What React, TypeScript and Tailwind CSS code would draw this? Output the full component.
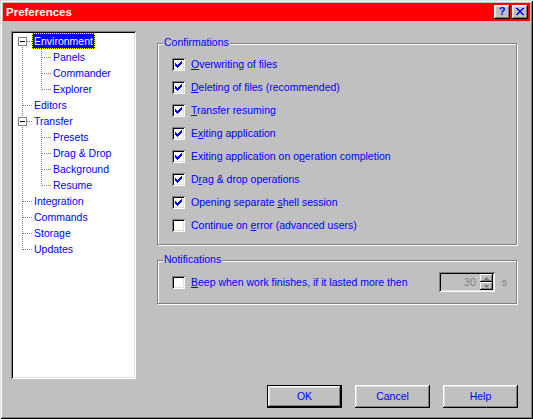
import React from 'react';

const raised =
  'shadow-[inset_-1px_-1px_#000,inset_1px_1px_#fff,inset_-2px_-2px_#808080,inset_2px_2px_#dfdfdf]';
const sunken =
  'shadow-[inset_1px_1px_#808080,inset_-1px_-1px_#fff,inset_2px_2px_#000,inset_-2px_-2px_#dfdfdf]';

const CHECK: [number, number, number][] = [
  [0, 6, 1],
  [1, 5, 2],
  [2, 0, 1],
  [2, 4, 3],
  [3, 0, 2],
  [3, 3, 3],
  [4, 0, 5],
  [5, 1, 3],
  [6, 2, 1],
];

const CLOSE: [number, number, number][] = [
  [0, 0, 2],
  [0, 6, 2],
  [1, 1, 2],
  [1, 5, 2],
  [2, 2, 4],
  [3, 3, 2],
  [4, 2, 4],
  [5, 1, 2],
  [5, 5, 2],
  [6, 0, 2],
  [6, 6, 2],
];

function CheckBox({ checked }: { checked: boolean }) {
  return (
    <div className={`w-[13px] h-[13px] shrink-0 bg-white flex items-center justify-center ${sunken}`}>
      {checked && (
        <svg width="7" height="7" viewBox="0 0 7 7" shapeRendering="crispEdges" fill="#0000ff">
          {CHECK.map(([y, x, w], i) => (
            <rect key={i} x={x} y={y} width={w} height={1} />
          ))}
        </svg>
      )}
    </div>
  );
}

function CheckRow({ checked, children }: { checked: boolean; children: React.ReactNode }) {
  return (
    <div className="flex items-center h-[13px] gap-[6px]">
      <CheckBox checked={checked} />
      <span className="leading-[13px] whitespace-nowrap text-[#0000ff]">{children}</span>
    </div>
  );
}

type TreeRow = {
  label: string;
  level: 0 | 1;
  pos: 'first' | 'mid' | 'last';
  box?: boolean;
  selected?: boolean;
};

const TREE: TreeRow[] = [
  { label: 'Environment', level: 0, pos: 'first', box: true, selected: true },
  { label: 'Panels', level: 1, pos: 'mid' },
  { label: 'Commander', level: 1, pos: 'mid' },
  { label: 'Explorer', level: 1, pos: 'last' },
  { label: 'Editors', level: 0, pos: 'mid' },
  { label: 'Transfer', level: 0, pos: 'mid', box: true },
  { label: 'Presets', level: 1, pos: 'mid' },
  { label: 'Drag & Drop', level: 1, pos: 'mid' },
  { label: 'Background', level: 1, pos: 'mid' },
  { label: 'Resume', level: 1, pos: 'last' },
  { label: 'Integration', level: 0, pos: 'mid' },
  { label: 'Commands', level: 0, pos: 'mid' },
  { label: 'Storage', level: 0, pos: 'mid' },
  { label: 'Updates', level: 0, pos: 'last' },
];

function Connector({ row }: { row: TreeRow }) {
  const dot = { stroke: '#808080', strokeWidth: 1, strokeDasharray: '1 1' };
  if (row.level === 0) {
    const y1 = row.pos === 'first' ? 8 : 0;
    const y2 = row.pos === 'last' ? 9 : 16;
    return (
      <svg width="19" height="16" viewBox="0 0 19 16" shapeRendering="crispEdges" className="shrink-0">
        <line x1="9.5" y1={y1} x2="9.5" y2={y2} {...dot} />
        <line x1="10" y1="8.5" x2="19" y2="8.5" {...dot} />
        {row.box && (
          <>
            <rect x="5.5" y="4.5" width="8" height="8" fill="#fff" stroke="#808080" />
            <line x1="7" y1="8.5" x2="12" y2="8.5" stroke="#000" />
          </>
        )}
      </svg>
    );
  }
  const y2 = row.pos === 'last' ? 9 : 16;
  return (
    <svg width="38" height="16" viewBox="0 0 38 16" shapeRendering="crispEdges" className="shrink-0">
      <line x1="9.5" y1="0" x2="9.5" y2="16" {...dot} />
      <line x1="28.5" y1="0" x2="28.5" y2={y2} {...dot} />
      <line x1="29" y1="8.5" x2="38" y2="8.5" {...dot} />
    </svg>
  );
}

function Button({ children, def }: { children: React.ReactNode; def?: boolean }) {
  if (def) {
    return (
      <div className="w-[75px] h-[23px] border border-black bg-[#c0c0c0]">
        <div className={`w-full h-full flex items-center justify-center text-[#0000ff] ${raised}`}>
          {children}
        </div>
      </div>
    );
  }
  return (
    <div className={`w-[75px] h-[23px] bg-[#c0c0c0] flex items-center justify-center text-[#0000ff] ${raised}`}>
      {children}
    </div>
  );
}

function SpinArrow({ up }: { up: boolean }) {
  return (
    <div className="w-[13px] h-[8px] bg-[#c0c0c0] flex items-center justify-center shadow-[inset_-1px_-1px_#000,inset_1px_1px_#fff,inset_-2px_-2px_#808080]">
      <svg width="5" height="3" viewBox="0 0 5 3" shapeRendering="crispEdges" fill="#808080">
        {up ? (
          <>
            <rect x="2" y="0" width="1" height="1" />
            <rect x="1" y="1" width="3" height="1" />
            <rect x="0" y="2" width="5" height="1" />
          </>
        ) : (
          <>
            <rect x="0" y="0" width="5" height="1" />
            <rect x="1" y="1" width="3" height="1" />
            <rect x="2" y="2" width="1" height="1" />
          </>
        )}
      </svg>
    </div>
  );
}

export default function App() {
  return (
    <div
      className={`w-[533px] h-[419px] bg-[#c0c0c0] p-[3px] flex flex-col font-['Liberation_Sans',Arial,sans-serif] text-[10.5px] select-none shadow-[inset_1px_1px_#dfdfdf,inset_-1px_-1px_#000,inset_2px_2px_#fff,inset_-2px_-2px_#808080]`}
    >
      {/* Title bar */}
      <div className="h-[18px] bg-[#ff0000] flex items-center justify-between pl-[3px] pr-[2px] shrink-0">
        <span className="text-white font-bold text-[11.5px] leading-[14px]">Preferences</span>
        <div className="flex items-center gap-[2px]">
          <div className={`w-[16px] h-[14px] bg-[#c0c0c0] flex items-center justify-center ${raised}`}>
            <span className="text-[#0000ff] font-bold text-[11px] leading-[11px] -mt-[1px]">?</span>
          </div>
          <div className={`w-[16px] h-[14px] bg-[#c0c0c0] flex items-center justify-center ${raised}`}>
            <svg width="8" height="7" viewBox="0 0 8 7" shapeRendering="crispEdges" fill="#0000ff" className="-mt-[1px]">
              {CLOSE.map(([y, x, w], i) => (
                <rect key={i} x={x} y={y} width={w} height={1} />
              ))}
            </svg>
          </div>
        </div>
      </div>

      {/* Body */}
      <div className="flex-1 flex flex-col pl-[8px] pt-[10px] pr-[12px]">
        <div className="flex gap-[21px]">
          {/* Tree */}
          <div className={`w-[125px] h-[348px] bg-white p-[2px] shrink-0 ${sunken}`}>
            {TREE.map((row, i) => (
              <div key={i} className="flex h-[16px] items-stretch">
                <Connector row={row} />
                <div
                  className={`h-[16px] px-[1px] border flex items-center leading-[13px] whitespace-nowrap ${
                    row.selected
                      ? 'bg-[#0000ff] text-white border-dotted border-[#ffff00]'
                      : 'border-transparent text-[#0000ff]'
                  }`}
                >
                  {row.label}
                </div>
              </div>
            ))}
          </div>

          {/* Right panel */}
          <div className="flex flex-col pt-[12px]">
            <div className="relative w-[360px] h-[202px] border border-[#808080] shadow-[inset_1px_1px_#fff,1px_1px_#fff] pt-[14px] pl-[14px]">
              <span className="absolute left-[5px] top-[-8px] px-[1px] bg-[#c0c0c0] leading-[13px] text-[#0000ff]">
                Confirmations
              </span>
              <div className="flex flex-col gap-[10px]">
                <CheckRow checked>
                  <u>O</u>verwriting of files
                </CheckRow>
                <CheckRow checked>
                  <u>D</u>eleting of files (recommended)
                </CheckRow>
                <CheckRow checked>
                  <u>T</u>ransfer resuming
                </CheckRow>
                <CheckRow checked>
                  E<u>x</u>iting application
                </CheckRow>
                <CheckRow checked>
                  Exiting application on o<u>p</u>eration completion
                </CheckRow>
                <CheckRow checked>
                  D<u>r</u>ag &amp; drop operations
                </CheckRow>
                <CheckRow checked>
                  Opening separate <u>s</u>hell session
                </CheckRow>
                <CheckRow checked={false}>
                  Continue on <u>e</u>rror (advanced users)
                </CheckRow>
              </div>
            </div>

            <div className="relative mt-[15px] w-[360px] h-[44px] border border-[#808080] shadow-[inset_1px_1px_#fff,1px_1px_#fff] pl-[14px] pr-[9px] flex items-center">
              <span className="absolute left-[5px] top-[-8px] px-[1px] bg-[#c0c0c0] leading-[13px] text-[#0000ff]">
                Notifications
              </span>
              <div className="flex-1 flex items-center">
                <CheckRow checked={false}>
                  <u>B</u>eep when work finishes, if it lasted more then
                </CheckRow>
              </div>
              <div className={`w-[56px] h-[20px] bg-[#c0c0c0] p-[2px] flex ${sunken}`}>
                <div className="flex-1 flex items-center justify-end pr-[4px] text-[#808080] leading-[13px]">
                  30
                </div>
                <div className="flex flex-col">
                  <SpinArrow up />
                  <SpinArrow up={false} />
                </div>
              </div>
              <span className="ml-[7px] text-[#808080] leading-[13px]">s</span>
            </div>
          </div>
        </div>

        {/* Buttons */}
        <div className="mt-[6px] flex justify-end gap-[13px]">
          <Button def>OK</Button>
          <Button>Cancel</Button>
          <Button>Help</Button>
        </div>
      </div>
    </div>
  );
}
